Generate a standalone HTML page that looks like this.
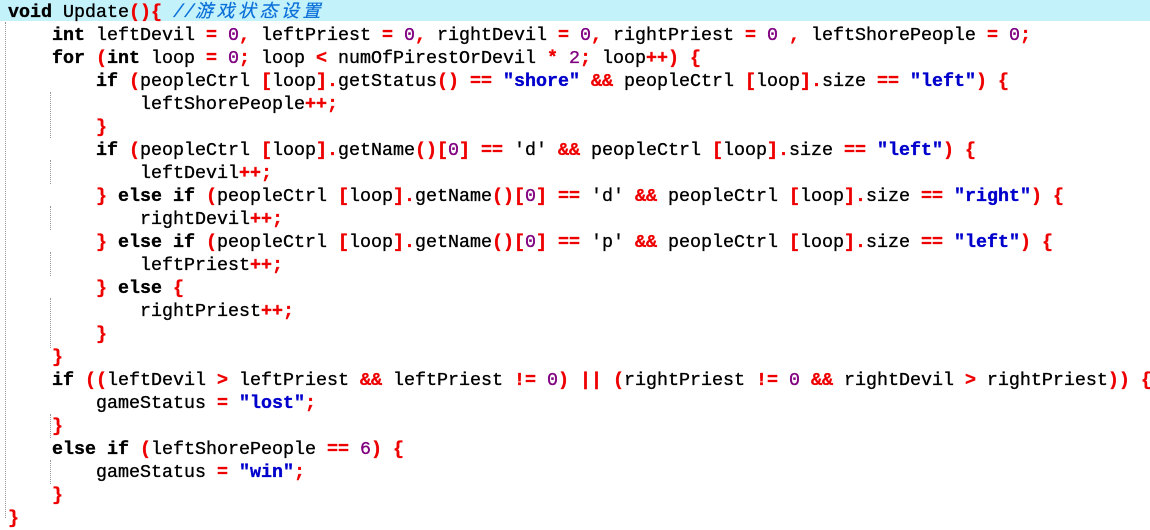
<!DOCTYPE html>
<html><head><meta charset="utf-8"><style>
html,body{margin:0;padding:0;background:#fff;width:1150px;height:530px;overflow:hidden}
.hl{position:absolute;left:0;top:0;width:1150px;height:21px;background:#c4f2fb}
pre{position:absolute;left:8px;top:-1px;margin:0;font-family:"Liberation Mono","DejaVu Sans Mono",monospace;font-size:18.33px;line-height:23px;color:#000;-webkit-text-stroke:0.35px #000}
.k{font-weight:bold}
.o{color:#e00;font-weight:bold;-webkit-text-stroke:0.35px #e00}
.n{color:#800080;-webkit-text-stroke:0.35px #800080}
.s{color:#00c;font-weight:bold;-webkit-text-stroke:0.35px #00c}
.c{color:#0a6fd8;font-style:italic;-webkit-text-stroke:0.2px #0a6fd8}
.cj{font-family:"Noto Sans CJK SC",sans-serif;letter-spacing:3.5px;font-size:18px}
.g{position:absolute;width:0;border-left:1px dotted #999}
</style></head><body>
<div class="hl"></div>
<div class="g" style="left:5px;top:22px;height:496px"></div>
<div class="g" style="left:50px;top:92px;height:46px"></div>
<div class="g" style="left:50px;top:160px;height:24px"></div>
<div class="g" style="left:50px;top:206px;height:24px"></div>
<div class="g" style="left:50px;top:252px;height:24px"></div>
<div class="g" style="left:50px;top:298px;height:50px"></div>
<div class="g" style="left:50px;top:414px;height:24px"></div>
<div class="g" style="left:50px;top:460px;height:24px"></div>
<pre><span class="k">void</span> Update<span class="o">(){</span> <span class="c">//<span class="cj">游戏状态设置</span></span>
    <span class="k">int</span> leftDevil <span class="o">=</span> <span class="n">0</span><span class="o">,</span> leftPriest <span class="o">=</span> <span class="n">0</span><span class="o">,</span> rightDevil <span class="o">=</span> <span class="n">0</span><span class="o">,</span> rightPriest <span class="o">=</span> <span class="n">0</span> <span class="o">,</span> leftShorePeople <span class="o">=</span> <span class="n">0</span><span class="o">;</span>
    <span class="k">for</span> <span class="o">(</span><span class="k">int</span> loop <span class="o">=</span> <span class="n">0</span><span class="o">;</span> loop <span class="o">&lt;</span> numOfPirestOrDevil <span class="o">*</span> <span class="n">2</span><span class="o">;</span> loop<span class="o">++)</span> <span class="o">{</span>
        <span class="k">if</span> <span class="o">(</span>peopleCtrl <span class="o">[</span>loop<span class="o">].</span>getStatus<span class="o">()</span> <span class="o">==</span> <span class="s">"shore"</span> <span class="o">&amp;&amp;</span> peopleCtrl <span class="o">[</span>loop<span class="o">].</span>size <span class="o">==</span> <span class="s">"left"</span><span class="o">)</span> <span class="o">{</span>
            leftShorePeople<span class="o">++;</span>
        <span class="o">}</span>
        <span class="k">if</span> <span class="o">(</span>peopleCtrl <span class="o">[</span>loop<span class="o">].</span>getName<span class="o">()[</span><span class="n">0</span><span class="o">]</span> <span class="o">==</span> 'd' <span class="o">&amp;&amp;</span> peopleCtrl <span class="o">[</span>loop<span class="o">].</span>size <span class="o">==</span> <span class="s">"left"</span><span class="o">)</span> <span class="o">{</span>
            leftDevil<span class="o">++;</span>
        <span class="o">}</span> <span class="k">else if</span> <span class="o">(</span>peopleCtrl <span class="o">[</span>loop<span class="o">].</span>getName<span class="o">()[</span><span class="n">0</span><span class="o">]</span> <span class="o">==</span> 'd' <span class="o">&amp;&amp;</span> peopleCtrl <span class="o">[</span>loop<span class="o">].</span>size <span class="o">==</span> <span class="s">"right"</span><span class="o">)</span> <span class="o">{</span>
            rightDevil<span class="o">++;</span>
        <span class="o">}</span> <span class="k">else if</span> <span class="o">(</span>peopleCtrl <span class="o">[</span>loop<span class="o">].</span>getName<span class="o">()[</span><span class="n">0</span><span class="o">]</span> <span class="o">==</span> 'p' <span class="o">&amp;&amp;</span> peopleCtrl <span class="o">[</span>loop<span class="o">].</span>size <span class="o">==</span> <span class="s">"left"</span><span class="o">)</span> <span class="o">{</span>
            leftPriest<span class="o">++;</span>
        <span class="o">}</span> <span class="k">else</span> <span class="o">{</span>
            rightPriest<span class="o">++;</span>
        <span class="o">}</span>
    <span class="o">}</span>
    <span class="k">if</span> <span class="o">((</span>leftDevil <span class="o">&gt;</span> leftPriest <span class="o">&amp;&amp;</span> leftPriest <span class="o">!=</span> <span class="n">0</span><span class="o">)</span> <span class="o">||</span> <span class="o">(</span>rightPriest <span class="o">!=</span> <span class="n">0</span> <span class="o">&amp;&amp;</span> rightDevil <span class="o">&gt;</span> rightPriest<span class="o">))</span> <span class="o">{</span>
        gameStatus <span class="o">=</span> <span class="s">"lost"</span><span class="o">;</span>
    <span class="o">}</span>
    <span class="k">else if</span> <span class="o">(</span>leftShorePeople <span class="o">==</span> <span class="n">6</span><span class="o">)</span> <span class="o">{</span>
        gameStatus <span class="o">=</span> <span class="s">"win"</span><span class="o">;</span>
    <span class="o">}</span>
<span class="o">}</span></pre>
</body></html>
